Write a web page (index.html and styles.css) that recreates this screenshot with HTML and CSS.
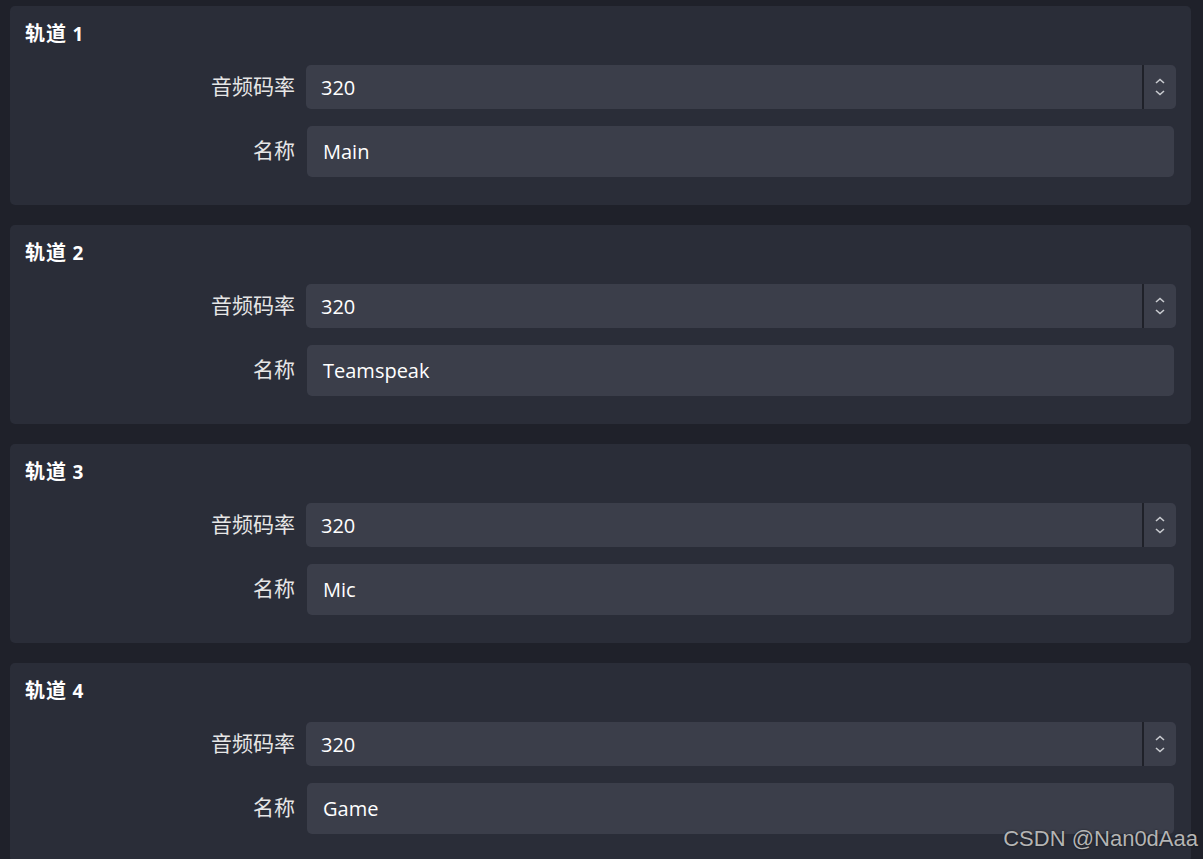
FILE: index.html
```html
<!DOCTYPE html>
<html lang="zh-CN">
<head>
<meta charset="utf-8">
<title>音频轨道</title>
<link rel="stylesheet" href="styles.css">
</head>
<body>
<div class="page">
  <section class="panel">
    <div class="title">轨道 <span class="num">1</span></div>
    <div class="form">
      <div class="label">音频码率</div>
      <div class="spin"><div class="spin-field">320</div><div class="spin-sep"></div><div class="spin-btns"><svg width="12" height="20" viewBox="0 0 12 20"><path d="M2 6 L6 2.5 L10 6" /><path d="M2 14 L6 17.5 L10 14" /></svg></div></div>
      <div class="label">名称</div>
      <div class="text-input">Main</div>
    </div>
  </section>
  <section class="panel">
    <div class="title">轨道 <span class="num">2</span></div>
    <div class="form">
      <div class="label">音频码率</div>
      <div class="spin"><div class="spin-field">320</div><div class="spin-sep"></div><div class="spin-btns"><svg width="12" height="20" viewBox="0 0 12 20"><path d="M2 6 L6 2.5 L10 6" /><path d="M2 14 L6 17.5 L10 14" /></svg></div></div>
      <div class="label">名称</div>
      <div class="text-input">Teamspeak</div>
    </div>
  </section>
  <section class="panel">
    <div class="title">轨道 <span class="num">3</span></div>
    <div class="form">
      <div class="label">音频码率</div>
      <div class="spin"><div class="spin-field">320</div><div class="spin-sep"></div><div class="spin-btns"><svg width="12" height="20" viewBox="0 0 12 20"><path d="M2 6 L6 2.5 L10 6" /><path d="M2 14 L6 17.5 L10 14" /></svg></div></div>
      <div class="label">名称</div>
      <div class="text-input">Mic</div>
    </div>
  </section>
  <section class="panel">
    <div class="title">轨道 <span class="num">4</span></div>
    <div class="form">
      <div class="label">音频码率</div>
      <div class="spin"><div class="spin-field">320</div><div class="spin-sep"></div><div class="spin-btns"><svg width="12" height="20" viewBox="0 0 12 20"><path d="M2 6 L6 2.5 L10 6" /><path d="M2 14 L6 17.5 L10 14" /></svg></div></div>
      <div class="label">名称</div>
      <div class="text-input">Game</div>
    </div>
  </section>
</div>
<div class="watermark">CSDN @Nan0dAaa</div>
</body>
</html>
```
FILE: styles.css
```css
html, body {
  margin: 0;
  padding: 0;
  height: 100%;
  overflow: hidden;
}
body {
  background: #1f212a;
  font-family: "Open Sans", "Noto Sans CJK SC", sans-serif;
  color: #e8e8e8;
  position: relative;
}
.page {
  padding: 6px 0 0 10px;
  width: 1181px;
}
.panel {
  background: #2a2d38;
  border-radius: 5px;
  height: 199px;
  box-sizing: border-box;
  margin-bottom: 20px;
  padding: 14px 15px 0 15px;
}
.title {
  font-family: "Noto Sans CJK SC", sans-serif;
  font-weight: 700;
  font-size: 20px;
  letter-spacing: 1px;
  line-height: 26px;
  color: #ffffff;
  height: 26px;
}
.title .num {
  font-family: "Open Sans", sans-serif;
  font-weight: 700;
  font-size: 19px;
  letter-spacing: 0;
}
.form {
  margin-top: 19px;
  display: grid;
  grid-template-columns: 270px 1fr;
  column-gap: 11px;
  row-gap: 17px;
  align-items: center;
}
.label {
  text-align: right;
  font-family: "Noto Sans CJK SC", sans-serif;
  font-size: 21px;
  line-height: 28px;
  padding-bottom: 5px;
  color: #e6e6e6;
}
.spin {
  display: flex;
  height: 44px;
  background: #3b3e4a;
  border-radius: 5px;
}
.spin-field {
  flex: 1;
  padding-left: 15px;
  font-size: 20px;
  line-height: 46px;
  color: #ffffff;
}
.spin-sep {
  width: 2px;
  background: #1f2129;
}
.spin-btns {
  width: 32px;
  display: flex;
  align-items: center;
  justify-content: center;
}
.spin-btns svg path {
  fill: none;
  stroke: #c9cbd0;
  stroke-width: 1.6;
}
.text-input {
  height: 51px;
  margin: 0 2px 0 1px;
  background: #3b3e4a;
  border-radius: 5px;
  padding-left: 16px;
  font-size: 20px;
  line-height: 51px;
  color: #ffffff;
}
.watermark {
  position: absolute;
  right: 5px;
  bottom: 8px;
  font-family: "Liberation Sans", Arial, sans-serif;
  font-size: 22px;
  line-height: 24px;
  color: #b4b4b4;
  text-shadow: 0 0 2px rgba(0, 0, 0, 0.6);
}
```
